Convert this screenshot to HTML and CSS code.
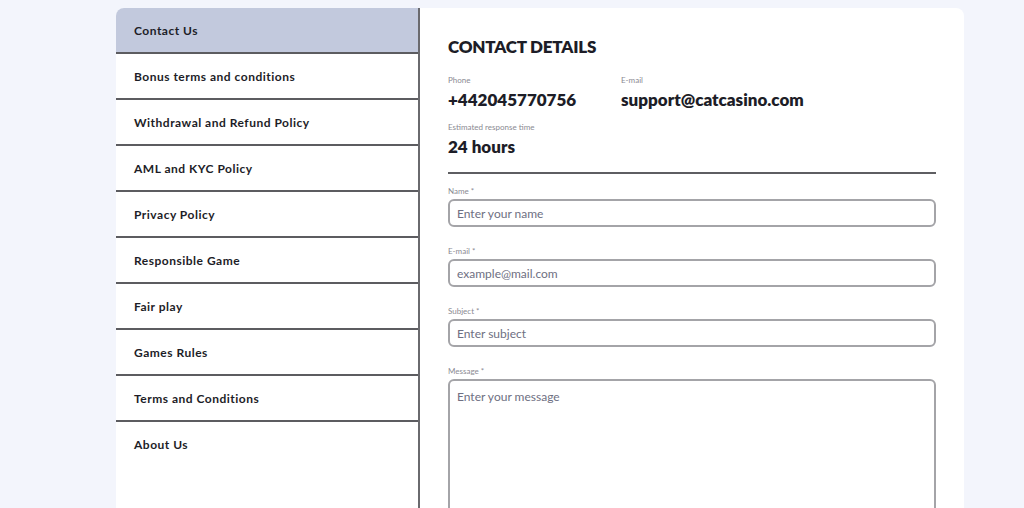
FILE: index.html
```html
<!DOCTYPE html>
<html lang="en">
<head>
    <meta charset="UTF-8">
    <meta name="viewport" content="width=device-width, initial-scale=1.0">
    <title>Contact Us</title>
    <link rel="stylesheet" href="styles.css">
</head>
<body>
    <div class="page">
        <!-- Menu lateral -->
        <nav class="side-menu">
            <a href="#" class="side-item active">Contact Us</a>
            <a href="#" class="side-item">Bonus terms and conditions</a>
            <a href="#" class="side-item">Withdrawal and Refund Policy</a>
            <a href="#" class="side-item">AML and KYC Policy</a>
            <a href="#" class="side-item">Privacy Policy</a>
            <a href="#" class="side-item">Responsible Game</a>
            <a href="#" class="side-item">Fair play</a>
            <a href="#" class="side-item">Games Rules</a>
            <a href="#" class="side-item">Terms and Conditions</a>
            <a href="#" class="side-item last">About Us</a>
        </nav>

        <main class="contact-box">
            <h2>CONTACT DETAILS</h2>
            <div class="details-row">
                <div class="detail phone">
                    <span class="detail-label">Phone</span>
                    <span class="detail-value">+442045770756</span>
                </div>
                <div class="detail">
                    <span class="detail-label">E-mail</span>
                    <span class="detail-value">support@catcasino.com</span>
                </div>
            </div>
            <div class="detail">
                <span class="detail-label">Estimated response time</span>
                <span class="detail-value">24 hours</span>
            </div>

            <form class="contact-form">
                <div class="field">
                    <label for="name">Name *</label>
                    <input type="text" id="name" placeholder="Enter your name">
                </div>
                <div class="field">
                    <label for="email">E-mail *</label>
                    <input type="email" id="email" placeholder="example@mail.com">
                </div>
                <div class="field">
                    <label for="subject">Subject *</label>
                    <input type="text" id="subject" placeholder="Enter subject">
                </div>
                <div class="field">
                    <label for="message">Message *</label>
                    <textarea id="message" placeholder="Enter your message"></textarea>
                </div>
            </form>
        </main>
    </div>
</body>
</html>
```

FILE: styles.css
```css
html, body {
    margin: 0;
    padding: 0;
    background: #f3f5fc;
    font-family: 'Lato', 'Noto Sans', sans-serif;
    color: #1d1d27;
}

.page {
    display: flex;
    width: 848px;
    margin: 8px 0 0 116px;
    background: #fff;
    border-radius: 8px;
    overflow: hidden;
    min-height: 600px;
}

.side-menu {
    width: 302px;
    border-right: 2px solid #6a6a6e;
    display: flex;
    flex-direction: column;
}

.side-item {
    display: flex;
    align-items: center;
    height: 44px;
    padding-left: 18px;
    border-bottom: 2px solid #5c5c60;
    font-size: 12px;
    font-weight: 700;
    letter-spacing: 0.5px;
    color: #1d1d27;
    text-decoration: none;
}

.side-item.active {
    background: #c2c9dd;
}

.side-item.last {
    border-bottom: none;
}

.contact-box {
    flex: 1;
    padding: 28px 28px 0 28px;
}

.contact-box h2 {
    margin: 0 0 18px 0;
    font-size: 17px;
    font-weight: 800;
    letter-spacing: -0.2px;
}

.details-row {
    display: flex;
}

.detail {
    display: flex;
    flex-direction: column;
    margin-bottom: 12px;
}

.detail.phone {
    width: 173px;
}

.detail-label {
    font-size: 8px;
    color: #8a8a92;
    margin-bottom: 4px;
}

.detail-value {
    font-size: 17px;
    font-weight: 800;
}

.contact-form {
    border-top: 2px solid #5e5e62;
    margin-top: 15px;
    padding-top: 12px;
}

.field {
    display: flex;
    flex-direction: column;
    margin-bottom: 19px;
}

.field label {
    font-size: 8px;
    color: #8a8a92;
    margin-bottom: 3px;
}

.field input,
.field textarea {
    box-sizing: border-box;
    height: 28px;
    padding: 0 7px;
    border: 2px solid #a4a4a8;
    border-radius: 6px;
    font-family: inherit;
    font-size: 12px;
    color: #1d1d27;
}

.field textarea {
    height: 200px;
    padding-top: 8px;
    resize: none;
}

.field input::placeholder,
.field textarea::placeholder {
    color: #6e6f82;
}
```
